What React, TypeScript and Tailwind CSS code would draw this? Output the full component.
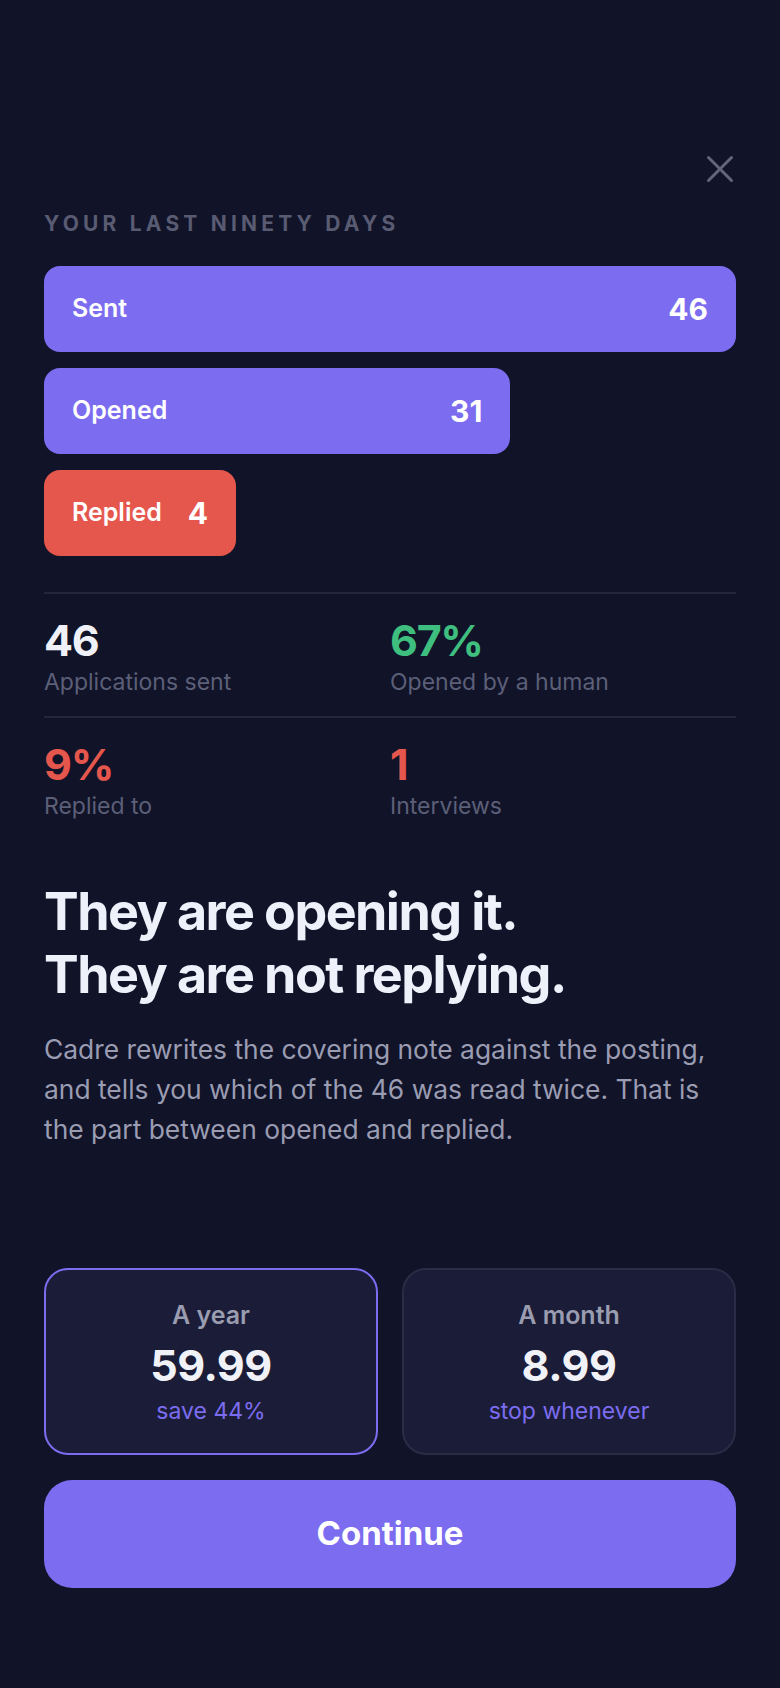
import React from "react";

const bars = [
  { label: "Sent", value: 46, color: "bg-[#7b6cf0]" },
  { label: "Opened", value: 31, color: "bg-[#7b6cf0]" },
  { label: "Replied", value: 4, color: "bg-[#e5574d]" },
];

const stats = [
  [
    { value: "46", label: "Applications sent", color: "text-[#f0f1f8]" },
    { value: "67%", label: "Opened by a human", color: "text-[#3fbf7f]" },
  ],
  [
    { value: "9%", label: "Replied to", color: "text-[#e5574d]" },
    { value: "1", label: "Interviews", color: "text-[#e5574d]" },
  ],
];

export default function App() {
  const max = 46;
  return (
    <div
      className="min-h-screen w-full bg-[#111328] px-11 pt-[153px] pb-[100px]"
      style={{ fontFamily: "Inter, 'Noto Sans', sans-serif" }}
    >
      <div className="flex justify-end">
        <svg width="32" height="32" viewBox="0 0 32 32" fill="none" stroke="#62657c" strokeWidth="3" strokeLinecap="round">
          <path d="M4.5 4.5 27.5 27.5" />
          <path d="M27.5 4.5 4.5 27.5" />
        </svg>
      </div>

      <div className="mt-[25px] text-[21px] leading-[28px] font-bold tracking-[0.2em] text-[#585b72] uppercase">
        Your last ninety days
      </div>

      <div className="mt-[28px] flex flex-col gap-4">
        {bars.map((b) => (
          <div
            key={b.label}
            className={`${b.color} flex h-[86px] min-w-fit items-center justify-between gap-[26px] rounded-[16px] px-7 text-white`}
            style={{ width: `${(b.value / max) * 100}%` }}
          >
            <span className="text-[25px] font-semibold">{b.label}</span>
            <span className="text-[30px] font-bold">{b.value}</span>
          </div>
        ))}
      </div>

      <div className="mt-9">
        {stats.map((row, i) => (
          <div
            key={i}
            className={`grid grid-cols-2 border-t-2 border-[#24263d] pt-[22px] ${i === 0 ? "pb-5" : ""}`}
          >
            {row.map((s) => (
              <div key={s.label} className="flex flex-col">
                <span className={`text-[43px] leading-[48px] font-bold tracking-[-0.03em] ${s.color}`}>{s.value}</span>
                <span className="mt-1 text-[23px] leading-[28px] text-[#5c5f78]">{s.label}</span>
              </div>
            ))}
          </div>
        ))}
      </div>

      <h1 className="mt-[60px] text-[52px] leading-[1.22] font-bold tracking-[-0.03em] text-[#eef0fa]">
        They are opening it.
        <br />
        They are not replying.
      </h1>

      <p className="mt-[22px] text-[26.4px] leading-[40px] text-[#9a9cb2]">
        Cadre rewrites the covering note against the posting, and tells you which of the 46 was read twice. That is the part between opened and replied.
      </p>

      <div className="mt-[119px] grid grid-cols-2 gap-6">
        <div className="flex flex-col items-center rounded-[24px] border-2 border-[#7b6cf0] bg-[#1b1d38] pt-[31px] pb-[28px]">
          <span className="text-[25px] leading-[28px] font-semibold text-[#9a9cb0]">A year</span>
          <span className="mt-3 text-[43px] leading-[48px] font-bold tracking-[-0.01em] text-[#f1f2f8]">59.99</span>
          <span className="mt-2 text-[23px] leading-[28px] text-[#7b6cf0]">save 44%</span>
        </div>
        <div className="flex flex-col items-center rounded-[24px] border-2 border-[#2a2c45] bg-[#1b1d38] pt-[31px] pb-[28px]">
          <span className="text-[25px] leading-[28px] font-semibold text-[#9a9cb0]">A month</span>
          <span className="mt-3 text-[43px] leading-[48px] font-bold tracking-[-0.01em] text-[#f1f2f8]">8.99</span>
          <span className="mt-2 text-[23px] leading-[28px] text-[#7b6cf0]">stop whenever</span>
        </div>
      </div>

      <button className="mt-[25px] flex h-[108px] w-full items-center justify-center rounded-[28px] bg-[#7b6cf0] text-[33px] font-bold text-white">
        Continue
      </button>
    </div>
  );
}
